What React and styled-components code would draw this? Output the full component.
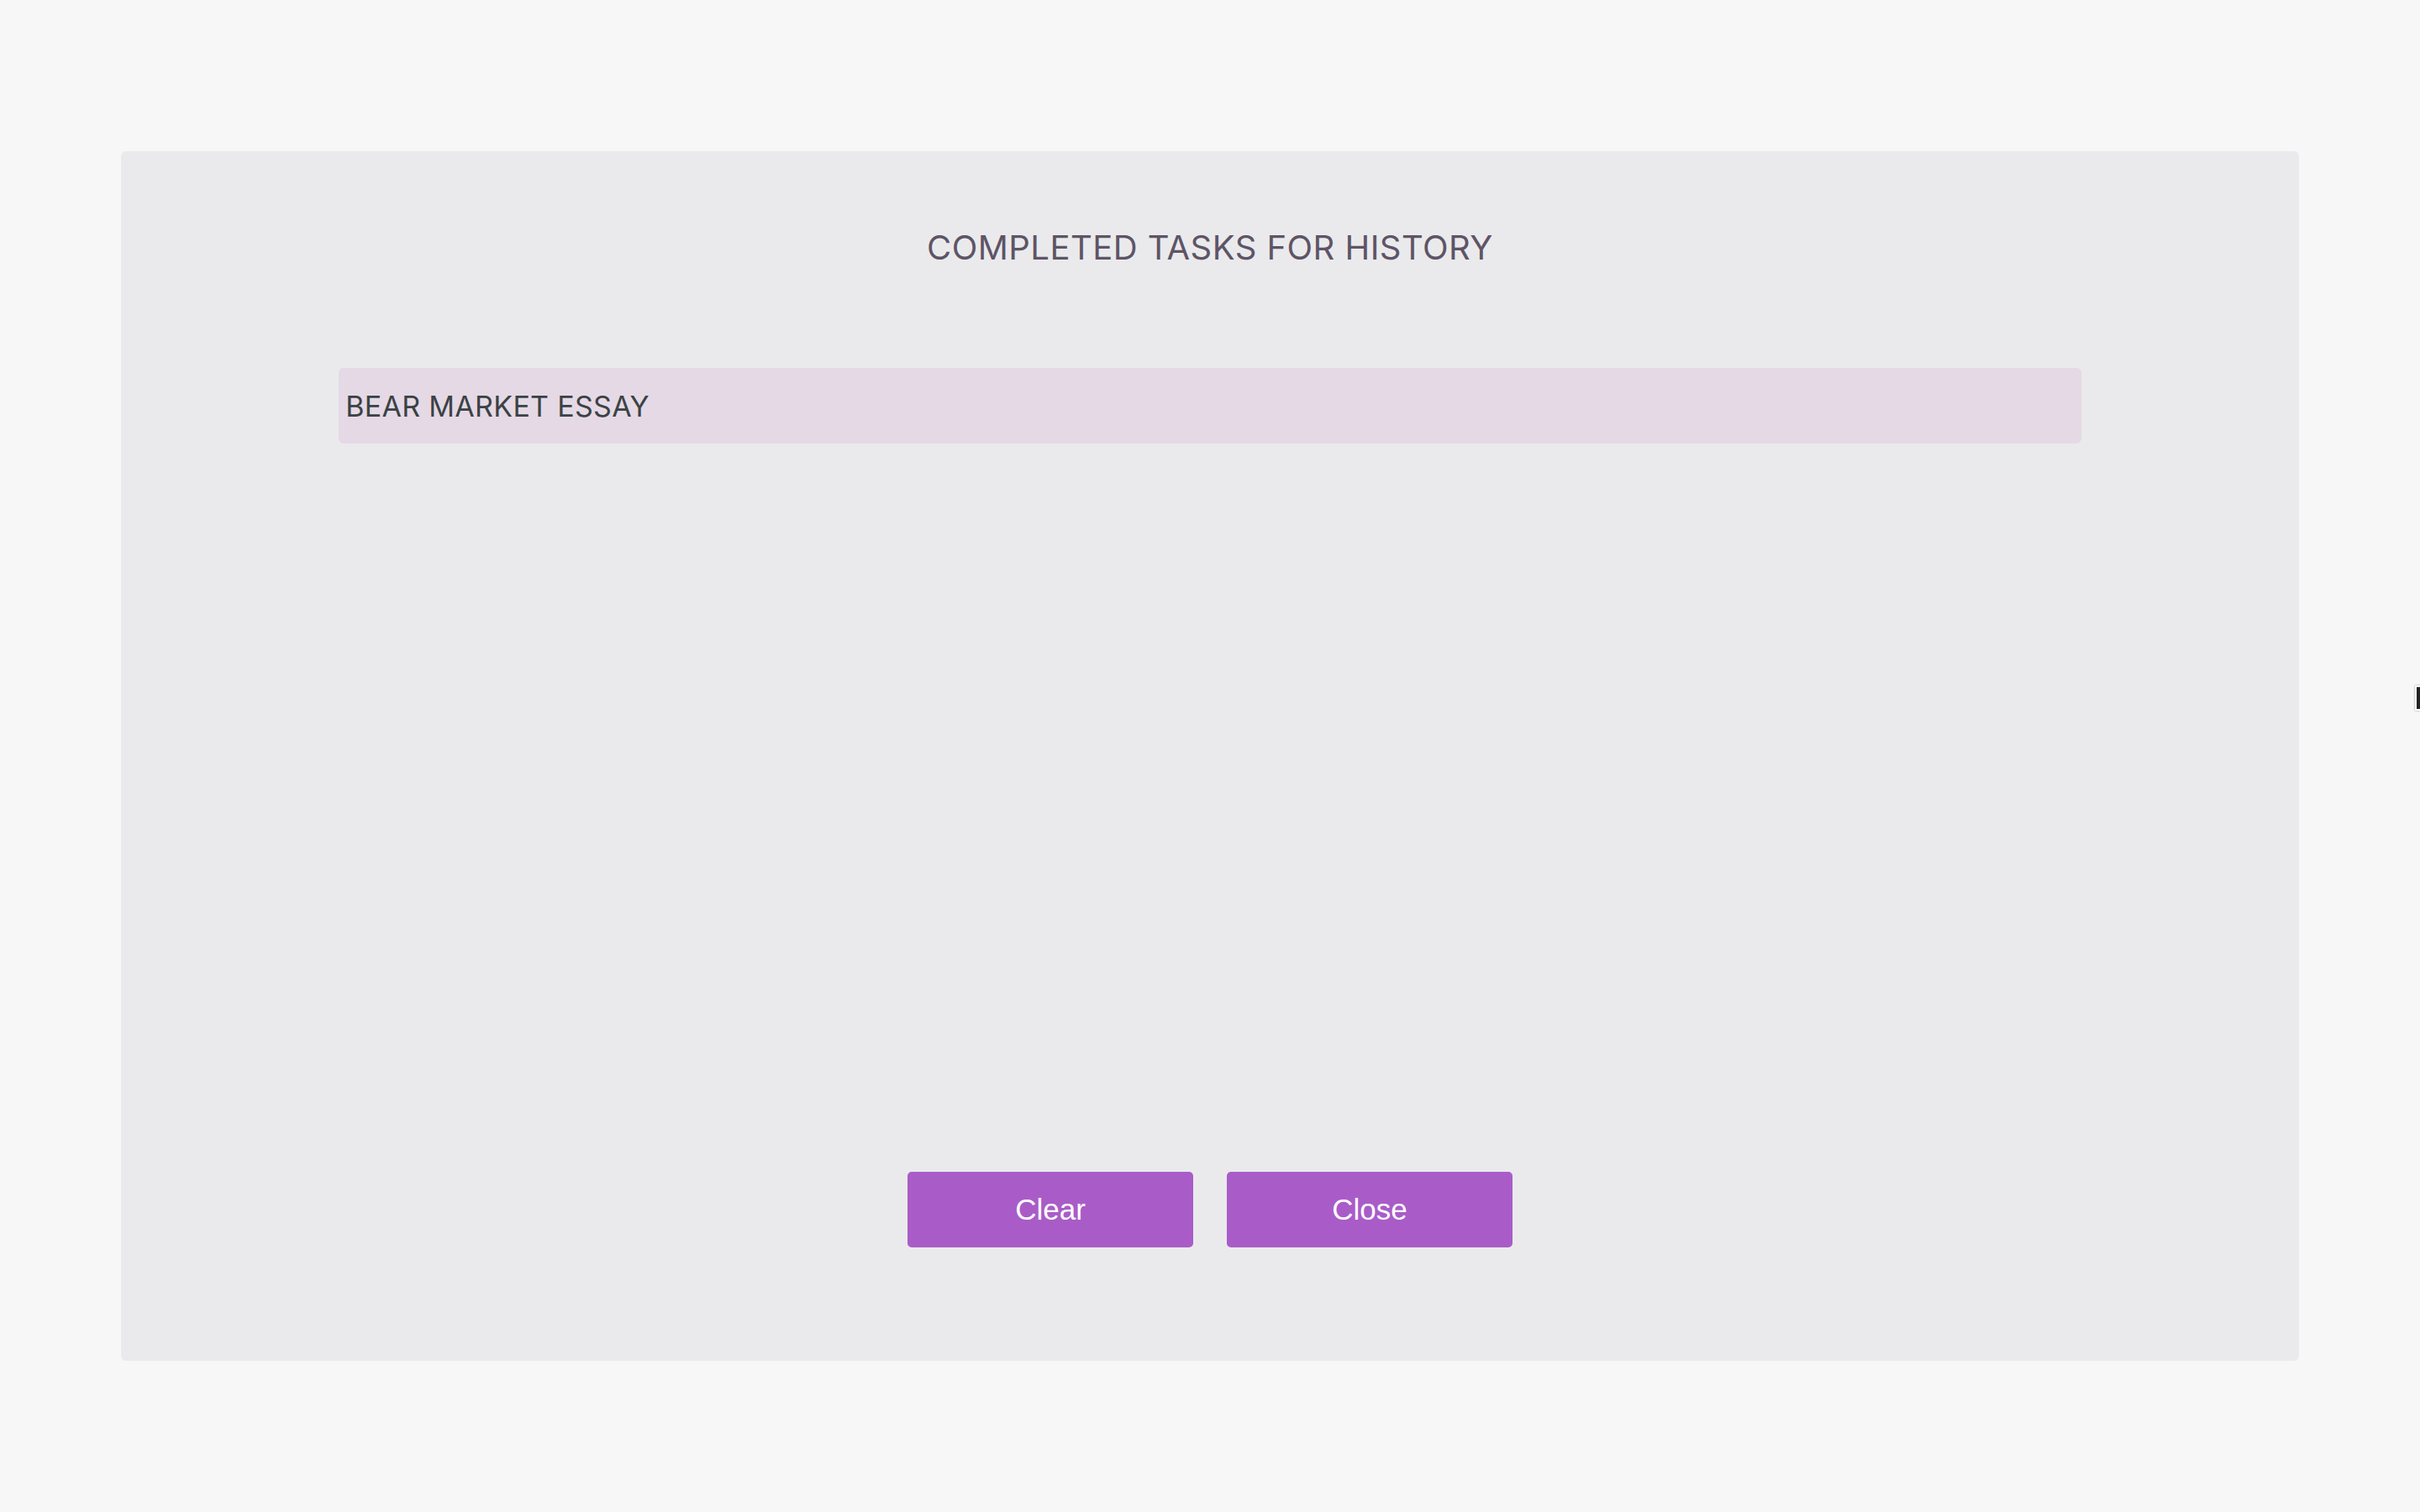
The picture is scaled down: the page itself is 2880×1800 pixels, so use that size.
import React from 'react';
import styled, { createGlobalStyle } from 'styled-components';

const Global = createGlobalStyle`
  html, body {
    margin:0;
    padding:0;
    background:#f7f7f7;
  }
  body {
    font-family:Inter, "Liberation Sans", sans-serif;
  }
`;

const S = {
  Page: styled.div`
    position:relative;
    width:100%;
    height:1800px;
    padding:180px 144px;
    box-sizing:border-box;
    overflow:hidden;
  `,
  Modal: styled.section`
    height:1440px;
    background:#eaeaec;
    border-radius:6px;
    display:flex;
    flex-direction:column;
    align-items:center;
    padding:91px 0 135px;
    box-sizing:border-box;
  `,
  Title: styled.h2`
    margin:0;
    font-family:Inter, sans-serif;
    font-weight:400;
    font-size:40px;
    line-height:48px;
    letter-spacing:0.45px;
    color:#5e5466;
  `,
  TaskList: styled.ul`
    list-style:none;
    margin:119px 0 0;
    padding:0;
    width:80%;
    flex:1;
  `,
  TaskItem: styled.li`
    height:90px;
    display:flex;
    align-items:center;
    padding-left:8px;
    background:#e5d9e6;
    border-radius:6px;
    font-family:Inter, sans-serif;
    font-size:34px;
    letter-spacing:0.3px;
    color:#3b4244;
  `,
  Actions: styled.div`
    display:flex;
    gap:40px;
  `,
  Button: styled.button`
    width:340px;
    height:90px;
    border:none;
    border-radius:5px;
    background:#a95cc8;
    color:#fff;
    font-family:"Liberation Sans", Arial, sans-serif;
    font-size:35px;
    cursor:pointer;
  `,
  Cursor: styled.div`
    position:absolute;
    right:-6px;
    top:816px;
    width:8px;
    height:26px;
    background:#222;
    border:2px solid #fff;
    box-shadow:0 0 2px rgba(0,0,0,0.4);
  `,
};

const tasks = [{ id: 1, name: 'BEAR MARKET ESSAY' }];

const App = () => (
  <>
    <Global />
    <S.Page>
      <S.Modal>
        <S.Title>COMPLETED TASKS FOR HISTORY</S.Title>
        <S.TaskList>
          {tasks.map((task) => (
            <S.TaskItem key={task.id}>{task.name}</S.TaskItem>
          ))}
        </S.TaskList>
        <S.Actions>
          <S.Button>Clear</S.Button>
          <S.Button>Close</S.Button>
        </S.Actions>
      </S.Modal>
      <S.Cursor />
    </S.Page>
  </>
);

export default App;
